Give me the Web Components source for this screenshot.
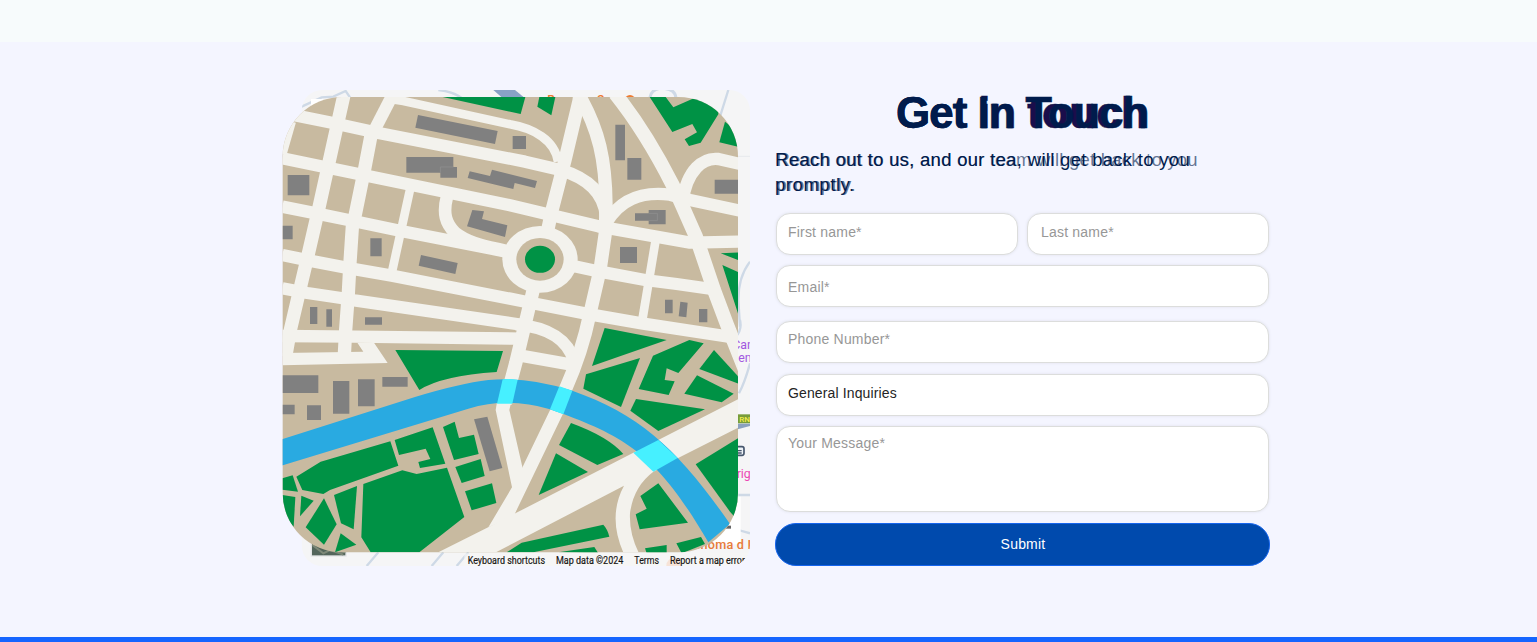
<!DOCTYPE html>
<html lang="en">
<head>
<meta charset="utf-8">
<title>Get In Touch</title>
<style>
html,body{margin:0;padding:0}
body{font-family:"Liberation Sans",Arial,sans-serif;background:#f4f5ff;height:642px;overflow:hidden}
</style>
</head>
<body>
<contact-page></contact-page>

<template id="city-map">
<style>
:host{display:block;width:485px;height:495px}
svg{display:block;width:485px;height:495px}
.r{fill:none;stroke:#f3f2ed;stroke-linejoin:round}
.w{fill:#f3f2ed}.g{fill:#009245}.b{fill:#808080}.c{fill:#46f0ff}
text{font-family:Roboto,sans-serif}
</style>
<svg viewBox="0 0 1455 1485">
<defs>
<clipPath id="card"><rect x="80" y="30" width="1345" height="1428" rx="62"/></clipPath>
<clipPath id="plan"><rect x="23" y="51" width="1366" height="1366" rx="178"/></clipPath>
</defs>
<!-- embedded street map underneath -->
<g clip-path="url(#card)">
<rect x="80" y="30" width="1345" height="1428" fill="#f5f5f6"/>
<path d="M655 30H720L752 56H685Z" fill="#89a2c6"/>
<g fill="none" stroke="#ced9e6" stroke-width="7">
<path d="M80 80L140 52L175 50L212 33L225 52M490 30Q535 35 560 54M1360 30L1335 110M1425 545Q1390 590 1390 660L1395 740M1395 720Q1402 750 1382 770M1425 850Q1410 905 1392 940M1390 1245H1425M275 1458L310 1417M470 1458L505 1417M545 1458L580 1417M1390 1350L1425 1360"/>
<path d="M1124 54Q1130 25 1160 25Q1200 25 1203 54" stroke-width="9"/>
</g>
<path d="M1385 229H1425" stroke="#e6e9ec" stroke-width="3"/>
<rect x="108" y="57" width="120" height="70" fill="#fff"/>
<g fill="#ee7b31" font-size="36" font-weight="500"><text x="817" y="72">R</text><text x="966" y="72">S</text><circle cx="1065" cy="62" r="17"/></g>
<g fill="#a259df" font-size="37"><text x="1372" y="808">Can</text><text x="1390" y="846">en</text></g>
<rect x="1370" y="1003" width="70" height="27" fill="#789c39"/><text x="1393" y="1026" font-size="24" font-weight="500" fill="#f6ee49">RN</text>
<path d="M1380 1031H1425V1038L1388 1048Z" fill="#8ba1be"/>
<rect x="1380" y="1100" width="27" height="26" rx="6" fill="#edf2f6" stroke="#46566c" stroke-width="5"/><path d="M1386 1112H1400M1386 1119H1400" stroke="#46566c" stroke-width="4"/>
<text x="1385" y="1195" font-size="37" fill="#ec48b4">rig</text>
<rect x="1290" y="1250" width="107" height="143" fill="#fff"/>
<rect x="1342" y="1337" width="26" height="9" fill="#666"/>
<text x="1256" y="1406" font-size="38" font-weight="500" fill="#e77b3a" textLength="172">enoma d I</text>
<circle cx="1198" cy="1457" r="24" fill="#f7b48e"/>
<rect x="107" y="1350" width="108" height="80" fill="#e3e4e6"/><rect x="111" y="1350" width="100" height="76" fill="#53655b"/>
<path d="M112 1395L145 1420L165 1410L205 1424M135 1400L170 1408L211 1417" stroke="#7d8878" stroke-width="6" fill="none"/>
<rect x="568" y="1420" width="857" height="38" fill="#f7f7f7" opacity=".7"/>
<g font-size="30" fill="#151515" stroke="#151515" stroke-width=".5">
<text x="578" y="1451" textLength="232" lengthAdjust="spacingAndGlyphs">Keyboard shortcuts</text>
<text x="843" y="1451" textLength="202" lengthAdjust="spacingAndGlyphs">Map data ©2024</text>
<text x="1078" y="1451" textLength="74" lengthAdjust="spacingAndGlyphs">Terms</text>
<text x="1185" y="1451" textLength="225" lengthAdjust="spacingAndGlyphs">Report a map error</text>
</g>
</g>
<!-- city plan -->
<g clip-path="url(#plan)">
<rect x="20" y="50" width="1372" height="1370" fill="#c8baa0"/>
<g class="r" stroke-width="37">
<path d="M22 98L163 127L307 158L750 245L857 270Q985 308 993 410"/>
<path d="M22 235L163 264L290 290L705 376L815 402L970 439L1245 488L1285 487L1395 485"/>
<path d="M22 380L127 401L253 427L378 453L690 514"/>
<path d="M22 525L115 544L225 565L350 587L705 656L785 672L945 703L1100 730L1360 770"/>
<path d="M22 625L97 639L198 654L238 661L745 735"/>
<path d="M20 768L240 770L740 776"/>
<path d="M350 50L300 147"/>
<path d="M516 350C503 400 512 430 540 458C580 490 630 498 690 512" stroke-width="38"/>
<path d="M722 733C820 742 880 780 897 845" stroke-width="36"/>
<path d="M720 824L885 853"/>
<path d="M994 428C1035 360 1095 333 1185 344L1245 360L1395 392"/>
<path d="M1222 366C1236 268 1285 232 1330 237L1395 252"/>
<path d="M895 558L975 575L1110 600L1205 612L1310 627"/>
</g>
<g class="r" stroke-width="40">
<path d="M208 40L183 152L132 382L100 521L69 652L46 750L32 830"/>
<path d="M300 145L287 172L269 266L241 403L232 441L225 547L220 640L212 750L208 825"/>
<path d="M915 40L912 63L870 240L830 395L815 465"/>
<path d="M777 620L722 850L690 970"/>
<path d="M912 45C972 150 992 240 993 375L991 460L975 570L945 700Q920 820 872 926L845 995L680 1337"/>
<path d="M1020 40C1100 140 1150 230 1193 315C1220 370 1240 420 1263 470L1317 630L1356 734L1422 900" stroke-width="42"/>
</g>
<g class="r" stroke-width="26">
<path d="M340 56L385 63L705 133C775 145 840 180 849 245"/>
<path d="M407 320L350 580"/><path d="M1142 480L1102 720"/><path d="M50 125L22 222"/>
</g>
<path class="w" d="M22 819L265 815L247 788H297L338 849L22 856Z"/>
<path class="w" d="M667 960L662 990L711 1222L640 1342L715 1310L760 1200L743 1165L703 990L710 960Z"/>
<path class="w" d="M490 1417L647 1338L1075 1118L1395 955V1040L1208 1135L1135 1175Q1075 1220 1065 1300Q1062 1360 1092 1420H1046Q997 1310 1047 1217L663 1417Z"/>
<ellipse class="w" cx="795" cy="538" rx="113" ry="100"/><ellipse cx="795" cy="538" rx="71" ry="64" fill="#c8baa0"/><ellipse class="g" cx="795" cy="538" rx="45" ry="40.500"/>
<!-- river and bridges -->
<path d="M20 1078L420 951Q555 910 640 900Q755 888 892 932C1100 1005 1215 1115 1365 1332L1300 1387C1150 1130 1060 1070 825 988Q700 950 580 986L20 1157Z" fill="#29aae1"/>
<path class="c" d="M683 898Q704 896 728 899L712 971H666Z"/><path class="c" d="M853 919L892 932L865 1003L825 988Z"/><path class="c" d="M1150 1080L1208 1134L1135 1175L1075 1118Z"/>
<!-- parks -->
<g class="g">
<path d="M503 51H751L737 102Z"/><path d="M793 51H841L829 106L787 80Z"/>
<path d="M1124 51H1172L1195 82L1265 51H1330V103L1277 188L1242 198L1229 178L1266 157L1252 132L1192 156Z"/>
<path d="M1350 125L1395 160V202L1333 187Z"/>
<path d="M1337 520L1392 517V541ZM1342 555L1392 577V710Z"/>
<path d="M361 810L684 813L665 876Q500 887 433 930Z"/>
<path d="M989 744L1175 780L951 858Z"/><path d="M933 883L1095 834L1038 981L925 926Z"/>
<path d="M1134 827L1243 780L1286 790L1210 879L1175 865L1169 900L1199 904L1181 945L1091 927Z"/>
<path d="M1317 810L1395 895V913L1273 867Z"/><path d="M1266 886L1376 941L1340 967L1228 941Z"/>
<path d="M1083 957L1290 988L1150 1053L1066 992Z"/>
<path d="M888 1029Q1000 1070 1045 1122L967 1155L852 1095Z"/><path d="M843 1120L939 1176L791 1245Z"/>
<path d="M1262 1153L1392 1073V1325L1365 1295Z"/>
<path d="M1150 1210L1239 1328L1094 1348L1082 1303L1115 1286L1096 1248Z"/>
<path d="M695 1417L740 1388L985 1334Q998 1348 1003 1370L775 1417Z"/><path d="M850 1417L958 1401L970 1420ZM1110 1405L1175 1395V1420H1115ZM1204 1390L1278 1371L1290 1392L1220 1420Z"/>
<path d="M64 1190L137 1145L346 1084L370 1157L165 1230L145 1242L82 1230Z"/>
<path d="M359 1080L473 1042L511 1151L435 1164L430 1146L466 1137L452 1106L372 1125Z"/>
<path d="M504 1041L539 1025L552 1074L597 1064L611 1122L537 1140Z"/><path d="M541 1161L617 1137L629 1188L560 1209Z"/><path d="M570 1234L651 1210L664 1269L590 1291Z"/>
<path d="M265 1212L382 1171L425 1182L516 1163L568 1311L433 1417H287L259 1372Z"/>
<path d="M177 1245L246 1218L236 1348L198 1330Z"/><path d="M147 1255L185 1333L147 1394L92 1342Z"/>
<path d="M79 1247L116 1262L75 1309Z"/><path d="M22 1195L53 1186L69 1235L22 1229Z"/><path d="M22 1245L61 1251L56 1340L22 1300Z"/><path d="M197 1360L244 1394L180 1417Z"/>
</g>
<!-- buildings -->
<g class="b">
<path d="M429 105L668 153L660 192L421 143Z"/><path d="M713 168H753V207H713Z"/>
<path d="M394 231H535V261H546V293H496V278H394Z"/><path d="M584 274L645 288L651 269L786 303L780 324L719 309L715 327L578 294Z"/>
<path d="M38 285H103V346H38ZM22 437H53V478H22ZM286 475H320V529H286Z"/>
<path d="M592 390L627 394L621 417L697 436L690 471L576 439Z"/><path d="M438 525L548 549L541 582L431 557Z"/>
<path d="M105 681H127V732H105ZM154 688H171V740H154ZM270 712H321V734H270Z"/>
<path d="M1021 134H1050V241H1021ZM1057 234H1099V299H1057ZM1319 299H1392V341H1319Z"/>
<path d="M1080 400H1121V390H1172V433H1121V422H1080ZM1035 501H1086V549H1035Z"/>
<path d="M1170 659H1193V700H1170ZM1216 665L1238 668L1234 712L1211 709ZM1272 687H1297V727H1272Z"/>
<path d="M22 886H130V939H22ZM22 974H59V1003H22ZM96 976H138V1020H96ZM174 903H223V1001H174ZM249 898H299V979H249ZM322 891H398V920H322Z"/>
<path d="M597 1018L637 1010L682 1164L644 1174Z"/>
</g>
<path d="M496 278V261H535M1121 400H1147V422H1121" fill="none" stroke="#929292" stroke-width="2"/>
</g>
</svg>
</template>

<template id="form-field">
<style>
:host{display:block;box-sizing:border-box;height:42px;border:1px solid #dcdddc;border-radius:14px;background:#fff;box-shadow:0 0 3px #dfe1ea;color:#979797;font-size:14px;line-height:16px;letter-spacing:.2px;padding:var(--t,10px) 12px 0 var(--l,11px)}
:host([filled]){color:#242424;letter-spacing:.13px}
</style><slot></slot>
</template>

<template id="double-text">
<style>
:host{display:grid;color:#001b4c;white-space:nowrap}
::slotted(*){grid-area:1/1}
</style><slot></slot>
</template>

<template id="contact-form">
<style>
:host{display:block;width:495px;padding-top:8px;box-sizing:border-box}
.title{height:50px;font-size:44px;line-height:50px;font-weight:700;margin-left:121px;-webkit-text-stroke:.4px #001b4c}
.title .a{letter-spacing:-1.1px}.title .z{letter-spacing:-.85px;color:#1b0d4b}
.title .z i{font-style:normal;letter-spacing:.2px}
.lead{margin-top:9px;height:51px;font-size:18.5px;line-height:25px}
.lead .a{letter-spacing:.3px}.lead .z{color:#001b4c99;letter-spacing:.22px;margin-left:1.5px}
.lead i{font-style:normal;letter-spacing:.55px}
.fields{margin:15px 1px 0 1px;display:grid;grid-template-columns:242px 242px;column-gap:9px}
.wide{grid-column:1/3}
.email{margin-top:10px}.phone{margin-top:14px}.topic{margin-top:10.5px}.msg{margin-top:10.5px;height:86px}
button{display:block;width:495px;height:43px;margin-top:11px;border:1px solid #1665ee;border-radius:21px;background:#004aad;color:#fff;font:14px/38px "Liberation Sans",sans-serif;letter-spacing:.2px;padding:0 0 2px 1px}
</style>
<double-text class="title"><span class="z">Get in <i>touch</i></span><span class="a">Get In Touch</span></double-text>
<double-text class="lead"><span class="z">Reach out to us, and our team will get back to you<br><i>promptly.</i></span><span class="a">Reach out to us, and our tea, will get back to you<br><i>promptly.</i></span></double-text>
<div class="fields">
<form-field>First name*</form-field>
<form-field style="--l:13px">Last name*</form-field>
<form-field class="wide email" style="--t:13px">Email*</form-field>
<form-field class="wide phone" style="--t:9px">Phone Number*</form-field>
<form-field class="wide topic" filled style="--t:10.5px">General Inquiries</form-field>
<form-field class="wide msg" style="--t:8px">Your Message*</form-field>
</div>
<button>Submit</button>
</template>

<template id="contact-page">
<style>
:host{display:grid;grid-template-rows:42px 595px 5px;height:642px}
header{background:#f7fbfc}
main{display:flex;gap:15px;padding:38px 0 0 275px;background:#f4f5ff}
footer{background:#1565ff}
</style>
<header></header>
<main><city-map></city-map><contact-form></contact-form></main>
<footer></footer>
</template>

<script>
for (const name of ['double-text','form-field','city-map','contact-form','contact-page']) {
  customElements.define(name, class extends HTMLElement {
    constructor() {
      super();
      this.attachShadow({mode:'open'}).append(document.getElementById(name).content.cloneNode(true));
    }
  });
}
</script>
</body>
</html>
